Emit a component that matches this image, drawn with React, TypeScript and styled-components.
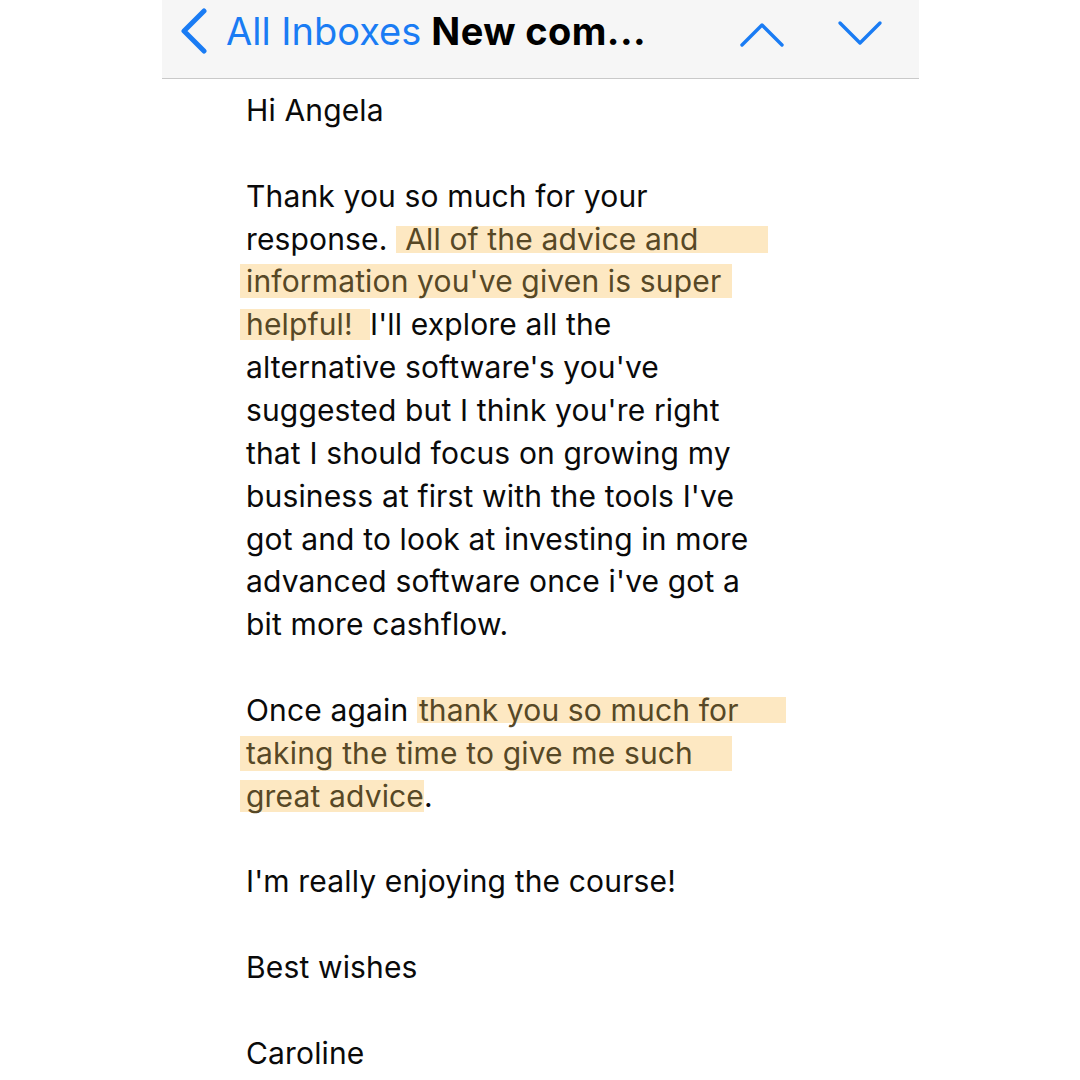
import styled, { createGlobalStyle } from 'styled-components'

const Global = createGlobalStyle`
  html, body {
    margin: 0;
    padding: 0;
    background: #ffffff;
  }
  body {
    font-family: Inter, "Noto Sans", sans-serif;
  }
`

const Page = styled.div`
  width: 1080px;
  height: 1080px;
  overflow: hidden;
  display: flex;
  justify-content: center;
  background: #ffffff;
`

const Column = styled.div`
  width: 757px;
  margin-left: 1px;
  display: flex;
  flex-direction: column;
`

const NavBar = styled.div`
  height: 79px;
  background: #f6f6f6;
  border-bottom: 1px solid #c9c9c9;
  display: flex;
  align-items: flex-start;
  padding: 0 0 0 17px;
  box-sizing: border-box;
`

const Back = styled.div`
  display: flex;
  align-items: center;
  gap: 17px;
  height: 62px;
  white-space: nowrap;
`

const BackLabel = styled.span`
  color: #1a7cf4;
  font-size: 38px;
  letter-spacing: 0px;
`

const Title = styled.span`
  color: #000;
  font-size: 38px;
  font-weight: 700;
  letter-spacing: 0.4px;
  margin-left: 10px;
`

const Arrows = styled.div`
  margin-left: auto;
  display: flex;
  gap: 52px;
  padding: 20px 36px 0 0;
`

const Body = styled.div`
  padding: 10px 0 0 84px;
  font-size: 30px;
  line-height: 42.86px;
  color: #0a0a0a;
  letter-spacing: 0.15px;
`

const Line = styled.div`
  height: 42.86px;
  white-space: nowrap;
`

const Gap = styled.div`
  height: 42.86px;
`

const Mark = styled.span<{ $w: number; $h: number; $l?: number }>`
  display: inline-block;
  box-sizing: border-box;
  width: ${p => p.$w}px;
  line-height: ${p => p.$h}px;
  padding-left: ${p => p.$l ?? 6}px;
  margin-left: ${p => (p.$l === undefined ? -6 : 0)}px;
  background: #fde8c2;
  color: #574826;
  white-space: nowrap;
`

const Chevron = ({ up }: { up?: boolean }) => (
  <svg width="46" height="28" viewBox="0 0 46 28" fill="none">
    <path
      d={up ? 'M3 25 L23 5 L43 25' : 'M3 3 L23 23 L43 3'}
      stroke="#1a7cf4"
      strokeWidth="3.4"
      strokeLinecap="round"
      strokeLinejoin="round"
    />
  </svg>
)

export default function App() {
  return (
    <Page>
      <Global />
      <Column>
        <NavBar>
          <Back>
            <svg width="30" height="46" viewBox="0 0 30 46" fill="none">
              <path d="M25 3 L5 23 L25 43" stroke="#1a7cf4" strokeWidth="5" strokeLinecap="round" strokeLinejoin="round" />
            </svg>
            <span>
              <BackLabel>All Inboxes</BackLabel>
              <Title>New com...</Title>
            </span>
          </Back>
          <Arrows>
            <Chevron up />
            <Chevron />
          </Arrows>
        </NavBar>
        <Body>
          <Line>Hi Angela</Line>
          <Gap />
          <Line>Thank you so much for your</Line>
          <Line>
            response.{' '}
            <Mark $w={372} $h={27} $l={9}>All of the advice and</Mark>
          </Line>
          <Line>
            <Mark $w={492} $h={34}>information you've given is super</Mark>
          </Line>
          <Line>
            <Mark $w={130} $h={31}>helpful!</Mark>I'll explore all the
          </Line>
          <Line>alternative software's you've</Line>
          <Line>suggested but I think you're right</Line>
          <Line>that I should focus on growing my</Line>
          <Line>business at first with the tools I've</Line>
          <Line>got and to look at investing in more</Line>
          <Line>advanced software once i've got a</Line>
          <Line>bit more cashflow.</Line>
          <Gap />
          <Line>
            Once again{' '}
            <Mark $w={369} $h={26} $l={2}>thank you so much for</Mark>
          </Line>
          <Line>
            <Mark $w={492} $h={35}>taking the time to give me such</Mark>
          </Line>
          <Line>
            <Mark $w={184} $h={32}>great advice</Mark>.
          </Line>
          <Gap />
          <Line>I'm really enjoying the course!</Line>
          <Gap />
          <Line>Best wishes</Line>
          <Gap />
          <Line>Caroline</Line>
        </Body>
      </Column>
    </Page>
  )
}
